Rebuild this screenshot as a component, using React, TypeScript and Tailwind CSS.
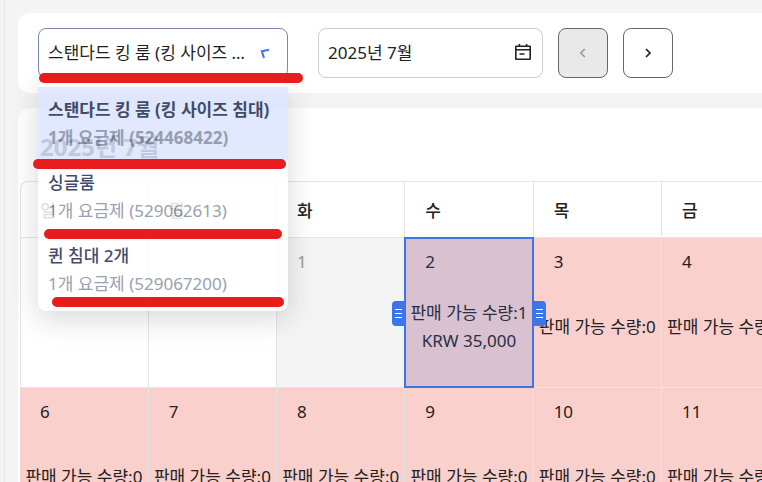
import { useState } from "react";
import clsx from "clsx";

const rooms = [
  { id: "524468422", name: "스탠다드 킹 룸 (킹 사이즈 침대)", plans: 1 },
  { id: "529062613", name: "싱글룸", plans: 1 },
  { id: "529067200", name: "퀸 침대 2개", plans: 1 },
];

const weekdays = ["일", "월", "화", "수", "목", "금", "토"];

type Day = {
  day?: number;
  stock?: number;
  price?: string;
  past?: boolean;
};

const weeks: Day[][] = [
  [
    {},
    {},
    { day: 1, past: true },
    { day: 2, stock: 1, price: "KRW 35,000" },
    { day: 3, stock: 0 },
    { day: 4, stock: 0 },
    { day: 5, stock: 0 },
  ],
  [6, 7, 8, 9, 10, 11, 12].map((day) => ({ day, stock: 0 })),
];

// three small lines on the selection handles
function Grip() {
  return (
    <svg width="7" height="11" viewBox="0 0 7 11" stroke="white" strokeWidth="1">
      <path d="M0 1.5h7M0 5.5h7M0 9.5h7" />
    </svg>
  );
}

function CalendarIcon() {
  return (
    <svg width="18" height="18" viewBox="0 0 18 18" fill="none" stroke="#222" strokeWidth="1.6" className="absolute right-[11px] top-[15px]">
      <rect x="1.8" y="3.2" width="14.4" height="13" rx="0.5" />
      <path d="M2 6.8h14M5.4 1v2M12.6 1v2M5.5 11h5" />
    </svg>
  );
}

function Arrow({ d }: { d: string }) {
  return (
    <svg width="10" height="10" viewBox="0 0 10 10" fill="none" stroke="currentColor" strokeWidth="1.7">
      <path d={d} />
    </svg>
  );
}

function RoomSelect() {
  const [selected, setSelected] = useState(rooms[0].id);

  return (
    <div className="relative w-[250px] shrink-0">
      <select
        aria-label="객실"
        value={selected}
        onChange={(e) => setSelected(e.target.value)}
        className="h-[50px] w-full appearance-none truncate rounded-lg border border-[#7a86b8] bg-white pl-[9px] pr-10 text-[#1f1f1f] outline-none"
      >
        {rooms.map((room) => (
          <option key={room.id} value={room.id}>
            {room.name}
          </option>
        ))}
      </select>
      <svg width="10" height="11" viewBox="0 0 10 11" fill="none" stroke="#4070f4" strokeWidth="2" className="pointer-events-none absolute right-[18px] top-5">
        <path d="M9 1.8L1.8 3.2L4 10" />
      </svg>

      {/* Open menu */}
      <div className="absolute left-0 top-[54px] z-20 w-full rounded-lg bg-white py-[5px] opacity-85 shadow-[0_8px_28px_rgba(0,0,0,0.18)]">
        <ul role="listbox" aria-label="객실 목록">
          {rooms.map((room) => (
            <li
              key={room.id}
              role="option"
              aria-selected={room.id === selected}
              onClick={() => setSelected(room.id)}
              className={clsx(
                "flex h-[73px] cursor-pointer flex-col justify-center whitespace-nowrap pl-[10px] leading-7",
                room.id === selected ? "bg-[#dce4ff] font-bold" : "font-medium"
              )}
            >
              <span className="text-[#1e2d50]">{room.name}</span>
              <span className={room.id === selected ? "text-[#848da2]" : "font-normal text-[#8790a6]"}>
                {room.plans}개 요금제 ({room.id})
              </span>
            </li>
          ))}
        </ul>
      </div>

      {/* Marker strokes */}
      <div className="absolute -right-[15px] left-px top-[45px] z-30 h-[10px] rounded-full bg-[#e81c1c]" />
      <div className="absolute -left-[5px] right-[2px] top-[131px] z-30 h-[10px] rounded-full bg-[#e81c1c]" />
      <div className="absolute left-[6px] right-[6px] top-[201px] z-30 h-[10px] rounded-full bg-[#e81c1c]" />
      <div className="absolute left-[14px] right-1 top-[269px] z-30 h-[10px] rounded-full bg-[#e81c1c]" />
    </div>
  );
}

function DayCell({ day, stock, price, past }: Day) {
  const selected = day === 2;

  return (
    <td
      className={clsx(
        "relative h-[150px] border border-[#e5e5e5] p-0 align-top",
        past && "bg-[#f4f4f4] text-[#999]",
        stock !== undefined && "bg-[#f9d0cc]"
      )}
    >
      <div className="flex h-[149px] flex-col pb-2 pt-[10px]">
        <div className="pl-5 leading-7">{day}</div>
        {stock !== undefined && (
          <div className="flex flex-1 flex-col items-center justify-center whitespace-nowrap leading-7">
            <span>판매 가능 수량:{stock}</span>
            {price && <span>{price}</span>}
          </div>
        )}
      </div>
      {selected && (
        <div className="absolute -inset-px z-10 border-2 border-[#3b76e8] bg-[#3b76e8]/17">
          <button aria-label="시작일 조절" className="absolute -left-[14px] top-[62px] flex h-[25px] w-[13px] items-center justify-center rounded-l bg-[#3b76e8]">
            <Grip />
          </button>
          <button aria-label="종료일 조절" className="absolute -right-[14px] top-[62px] flex h-[25px] w-[13px] items-center justify-center rounded-r bg-[#3b76e8]">
            <Grip />
          </button>
        </div>
      )}
    </td>
  );
}

export default function App() {
  const [month, setMonth] = useState("2025년 7월");

  return (
    <div className="flex h-screen overflow-hidden bg-[#f4f4f4] font-['Noto_Sans','Noto_Sans_CJK_KR',sans-serif] text-[17px] text-[#222]">
      <div className="w-[5px] shrink-0 border-r border-[#e6e6e6]" />

      <main className="flex min-w-0 flex-1 flex-col gap-[15px] pl-[13px] pt-[13px]">
        {/* Filters */}
        <section className="flex rounded-l-xl bg-white px-5 py-[15px]">
          <RoomSelect />
          <div className="relative ml-[30px] w-[225px] shrink-0">
            <input
              type="text"
              aria-label="조회 월"
              value={month}
              onChange={(e) => setMonth(e.target.value)}
              className="h-[50px] w-full rounded-lg border border-[#ccc] bg-white pb-[3px] pl-[9px] pr-10 outline-none"
            />
            <CalendarIcon />
          </div>
          <button aria-label="이전 달" disabled className="ml-[15px] flex size-[50px] items-center justify-center rounded-lg border border-[#666] bg-[#e9e9e9] text-[#999]">
            <Arrow d="M6.8 1L2.8 5L6.8 9" />
          </button>
          <button aria-label="다음 달" className="ml-[15px] flex size-[50px] items-center justify-center rounded-lg border border-[#666] bg-white">
            <Arrow d="M3 1L7 5L3 9" />
          </button>
        </section>

        {/* Calendar */}
        <section className="min-h-0 flex-1 overflow-hidden rounded-tl-xl bg-white pl-[2px] pt-5">
          <h2 className="mb-[15px] pl-5 text-2xl font-bold leading-[38px]">{month}</h2>
          <div className="w-[899px] rounded-tl-lg border-l border-t border-[#e5e5e5]">
            <table className="-ml-px -mt-px w-full table-fixed border-collapse border-hidden">
              <thead>
                <tr>
                  {weekdays.map((name) => (
                    <th key={name} className="h-14 border border-[#e5e5e5] p-0 pl-5 pt-[3px] text-left font-medium">
                      {name}
                    </th>
                  ))}
                </tr>
              </thead>
              <tbody>
                {weeks.map((week, i) => (
                  <tr key={i}>
                    {week.map((cell, j) => (
                      <DayCell key={j} {...cell} />
                    ))}
                  </tr>
                ))}
              </tbody>
            </table>
          </div>
        </section>
      </main>
    </div>
  );
}
